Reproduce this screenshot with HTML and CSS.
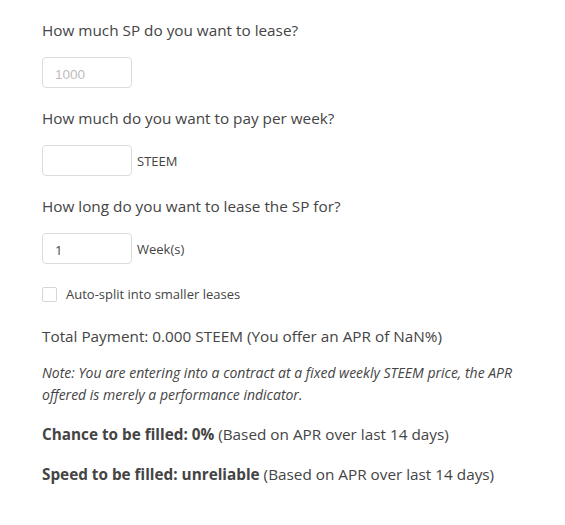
FILE: index.html
```html
<!DOCTYPE html>
<html>
<head>
<meta charset="utf-8">
<link rel="stylesheet" href="styles.css">
</head>
<body>
<div class="form">
  <div class="group">
    <div class="question">How much SP do you want to lease?</div>
    <div class="field-row">
      <input class="num-input" type="text" placeholder="1000">
    </div>
  </div>
  <div class="group">
    <div class="question">How much do you want to pay per week?</div>
    <div class="field-row">
      <input class="num-input" type="text">
      <span class="unit">STEEM</span>
    </div>
  </div>
  <div class="group">
    <div class="question">How long do you want to lease the SP for?</div>
    <div class="field-row">
      <input class="num-input" type="text" value="1">
      <span class="unit">Week(s)</span>
    </div>
  </div>
  <label class="check-row">
    <span class="checkbox"></span>
    <span class="check-label">Auto-split into smaller leases</span>
  </label>
  <p class="total">Total Payment: 0.000 STEEM (You offer an APR of NaN%)</p>
  <p class="note">Note: You are entering into a contract at a fixed weekly STEEM price, the APR offered is merely a performance indicator.</p>
  <p class="stat stat-first"><b>Chance to be filled: 0%</b> (Based on APR over last 14 days)</p>
  <p class="stat"><b>Speed to be filled: unreliable</b> (Based on APR over last 14 days)</p>
</div>
</body>
</html>
```

FILE: styles.css
```css
html, body {
  margin: 0;
  padding: 0;
  background: #fff;
}
body {
  font-family: "Open Sans", "DejaVu Sans", sans-serif;
  color: #444;
}
.form {
  padding: 19px 0 0 42px;
  width: 490px;
}
.group {
  margin-bottom: 19px;
}
.question {
  font-size: 15.3px;
  line-height: 22px;
  margin-bottom: 16px;
}
.field-row {
  display: flex;
  align-items: center;
}
.num-input {
  box-sizing: border-box;
  width: 90px;
  height: 31px;
  border: 1px solid #dcdcdc;
  border-radius: 4px;
  padding: 2px 12px 0 12px;
  font-family: "Open Sans", sans-serif;
  font-size: 13px;
  color: #444;
  outline: none;
  margin: 0;
  background: #fff;
}
.num-input::placeholder {
  font-family: "Liberation Sans", Arial, sans-serif;
  font-size: 13.5px;
  color: #bdbdbd;
}
.unit {
  font-size: 13px;
  margin-left: 5px;
  color: #444;
}
.check-row {
  display: flex;
  align-items: center;
  height: 22px;
  margin-top: 3px;
}
.checkbox {
  box-sizing: border-box;
  width: 15px;
  height: 15px;
  border: 1px solid #d6d6d6;
  border-radius: 2px;
  display: inline-block;
  background: #fff;
}
.check-label {
  font-size: 13px;
  margin-left: 9px;
}
.total {
  font-size: 15.3px;
  line-height: 22px;
  margin: 20px 0 0 0;
}
.note {
  font-size: 14px;
  font-style: italic;
  line-height: 22px;
  margin: 15px 0 0 0;
}
.stat {
  font-size: 15.3px;
  line-height: 22px;
  margin: 18px 0 0 0;
}
.stat-first {
  margin-top: 17px;
}
.stat b {
  font-weight: 700;
}
```
